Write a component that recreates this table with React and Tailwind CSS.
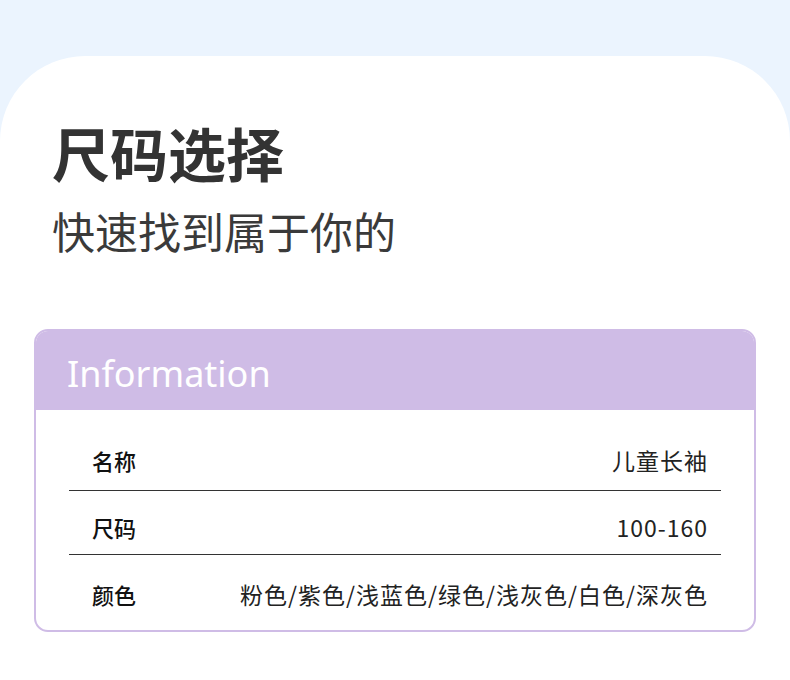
const rows = [
  { label: "名称", value: "儿童长袖", pt: "pt-[35px]", pb: "pb-[15px]", line: true },
  { label: "尺码", value: "100-160", pt: "pt-[21px]", pb: "pb-[12px]", line: true },
  { label: "颜色", value: "粉色/紫色/浅蓝色/绿色/浅灰色/白色/深灰色", pt: "pt-[24px]", pb: "pb-[21px]", line: false },
];

export default function App() {
  return (
    <div className="min-h-[680px] bg-[#ebf4fe] pt-[56px] font-['Noto_Sans','Noto_Sans_CJK_SC',sans-serif]">
      <div className="h-[624px] bg-white rounded-t-[85px] pt-[67px]">
        <h1 className="pl-[52px] text-[58px] leading-none font-bold text-[#333333] font-['Noto_Sans_CJK_SC',sans-serif]">
          尺码选择
        </h1>
        <p className="mt-[28px] pl-[52px] text-[43px] leading-none text-[#3a3a3a] font-['Noto_Sans_CJK_SC',sans-serif]">
          快速找到属于你的
        </p>

        <div className="mx-[34px] mt-[77px] rounded-[14px] border-2 border-[#cfbce6] overflow-hidden">
          <div className="h-[79px] bg-[#cfbce6] pl-[31px] pt-[25px]">
            <span className="block text-[36px] leading-none text-white font-['Noto_Sans',sans-serif]">
              Information
            </span>
          </div>
          <div className="px-[33px]">
            {rows.map((r) => (
              <div
                key={r.label}
                className={`flex items-center justify-between ${r.pt} ${r.pb} ${
                  r.line ? "border-b border-[#333333]" : ""
                }`}
              >
                <span className="pl-[23px] text-[22px] leading-[30px] font-medium text-[#111111] font-['Noto_Sans_CJK_SC',sans-serif]">
                  {r.label}
                </span>
                <span className="pr-[13px] text-[23px] leading-[30px] tracking-[1px] text-[#222222] font-['Noto_Sans_CJK_SC',sans-serif]">
                  {r.value}
                </span>
              </div>
            ))}
          </div>
        </div>
      </div>
    </div>
  );
}
